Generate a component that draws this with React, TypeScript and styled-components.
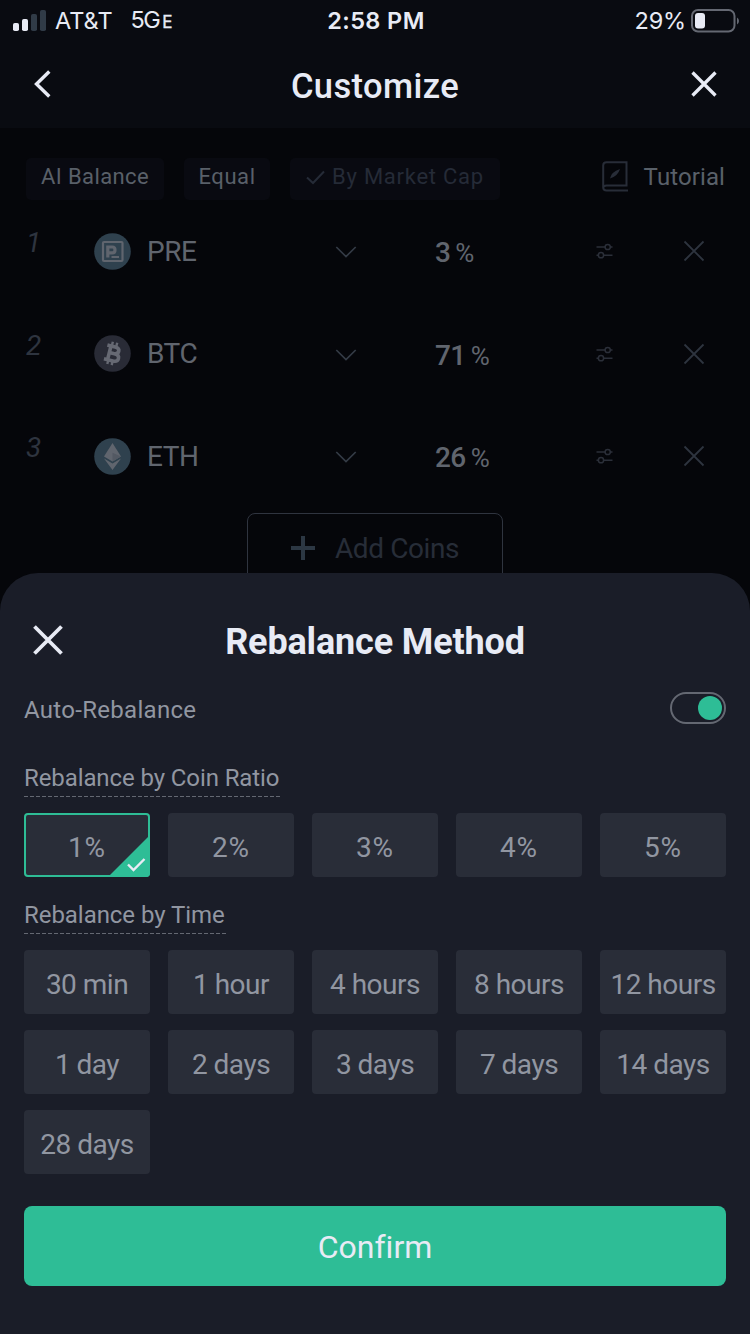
import React, { useState } from "react";
import styled, { createGlobalStyle } from "styled-components";

const GlobalStyle = createGlobalStyle`
  * { box-sizing: border-box; }
  html, body { margin: 0; padding: 0; background: #05060a; }
  body { font-family: Roboto, "Liberation Sans", sans-serif; font-variant-ligatures: none; overflow: hidden; }
  button { border: 0; padding: 0; margin: 0; background: none; font: inherit; color: inherit; }
  svg { display: block; flex: none; }
`;

const Screen = styled.div`
  position: relative;
  width: 750px;
  height: 1334px;
  background: #05060a;
  overflow: hidden;
`;

const TopArea = styled.header`
  height: 128px;
  background: #090b11;
  color: #e8ebf5;
`;

const StatusBar = styled.div`
  display: grid;
  grid-template-columns: 1fr auto 1fr;
  height: 40px;
  padding: 0 11px 0 13px;
  align-items: center;
  font-family: Inter, "Liberation Sans", sans-serif;
  font-size: 23.5px;
  line-height: 40px;
`;

const Carrier = styled.div`
  display: flex;
  align-items: center;
`;

const CarrierName = styled.span`
  margin-left: 9px;
  letter-spacing: 0;
`;

const Network = styled.span`
  margin-left: 18px;
  letter-spacing: -1.6px;
  small { font-size: 17px; margin-left: 3px; -webkit-text-stroke: 0.4px currentColor; }
`;

const Clock = styled.span`
  font-weight: 600;
  letter-spacing: 0.4px;
`;

const Battery = styled.div`
  display: flex;
  align-items: center;
  justify-content: flex-end;
  gap: 5px;
  letter-spacing: -0.2px;
`;

const NavBar = styled.div`
  display: grid;
  grid-template-columns: 100px 1fr 100px;
  height: 88px;
  align-items: center;
`;

const NavTitle = styled.h1`
  margin: 4px 0 0;
  text-align: center;
  font-size: 34.5px;
  font-weight: 500;
  line-height: 41px;
  letter-spacing: 0.4px;
`;

const NavButton = styled.button<{ $end?: boolean }>`
  display: flex;
  justify-content: ${(p) => (p.$end ? "flex-end" : "flex-start")};
  padding: ${(p) => (p.$end ? "0 33px 0 0" : "0 0 0 33px")};
`;

const PresetBar = styled.div`
  display: flex;
  height: 72px;
  padding: 30px 25px 0 26px;
  gap: 20px;
`;

const Preset = styled.button<{ $width: number; $active?: boolean; $spacing: number }>`
  display: flex;
  align-items: center;
  justify-content: center;
  gap: 7px;
  width: ${(p) => p.$width}px;
  height: 42px;
  padding-bottom: 5px;
  border-radius: 5px;
  background: #090a11;
  color: ${(p) => (p.$active ? "#252b37" : "#596069")};
  font-size: 22px;
  white-space: nowrap;
  letter-spacing: ${(p) => p.$spacing}px;
`;

const Tutorial = styled.div`
  display: flex;
  align-items: center;
  gap: 15px;
  height: 36px;
  margin-left: auto;
  color: #596069;
  font-size: 24px;
  letter-spacing: 0.1px;
`;

const TutorialText = styled.span`
  padding-top: 2px;
`;

const CoinRow = styled.div`
  display: grid;
  grid-template-columns: 68px 241px 100px 161px 87px 1fr;
  height: 102.5px;
  padding-left: 26px;
  align-items: center;
  color: #2e343f;
`;

const Position = styled.span`
  align-self: start;
  margin-top: 26px;
  font-size: 28px;
  font-style: italic;
  line-height: 33px;
`;

const CoinName = styled.div`
  display: flex;
  align-items: center;
  gap: 16px;
  color: #60656e;
  font-size: 28px;
  letter-spacing: -0.5px;
`;

const Share = styled.div`
  display: flex;
  align-items: baseline;
  gap: 5px;
  padding-top: 4px;
  color: #60656e;
  font-size: 28px;
  font-weight: 500;
  line-height: 32px;
  letter-spacing: -0.6px;
  small { font-size: 26px; font-weight: 400; }
`;

const AddCoins = styled.button`
  display: flex;
  width: 256px;
  height: 72px;
  margin: 5.5px auto 0;
  padding: 0 0 3px 42px;
  align-items: center;
  gap: 19px;
  border: 1px solid #2f343f;
  border-radius: 8px;
  color: #272d38;
  font-size: 28px;
  font-weight: 400;
  letter-spacing: -0.4px;
`;

const AddText = styled.span`
  padding-top: 2px;
`;

const Sheet = styled.section`
  position: absolute;
  left: 0;
  right: 0;
  bottom: 0;
  height: 761px;
  padding: 0 24px;
  border-radius: 38px 38px 0 0;
  background: #1a1d28;
  color: #9196a1;
`;

const SheetHeader = styled.div`
  display: grid;
  grid-template-columns: 60px 1fr 60px;
  height: 103px;
  padding-top: 31px;
  align-items: center;
  color: #e8ebf5;
`;

const SheetClose = styled.button`
  padding-left: 9px;
`;

const SheetTitle = styled.h2`
  margin: 3px 0 0;
  text-align: center;
  font-size: 36px;
  font-weight: 700;
  line-height: 42px;
  letter-spacing: -0.15px;
`;

const AutoRow = styled.div`
  display: flex;
  height: 64px;
  align-items: center;
  justify-content: space-between;
  font-size: 24px;
  letter-spacing: 0.3px;
`;

const AutoLabel = styled.span`
  padding-top: 4px;
`;

const Switch = styled.button<{ $on: boolean }>`
  display: flex;
  width: 56px;
  height: 32px;
  padding: 2px;
  align-items: center;
  justify-content: ${(p) => (p.$on ? "flex-end" : "flex-start")};
  border: 2px solid #646872;
  border-radius: 16px;
  &::after {
    content: "";
    width: 24px;
    height: 24px;
    border-radius: 50%;
    background: #2ebd96;
  }
`;

const Group = styled.div`
  display: flex;
  flex-direction: column;
  align-items: flex-start;
`;

const GroupLabel = styled.div<{ $spacing: number }>`
  margin-top: 22px;
  height: 35px;
  padding-right: 1px;
  font-size: 24px;
  line-height: 32px;
  letter-spacing: ${(p) => p.$spacing}px;
  background: repeating-linear-gradient(90deg, #646872 0 4px, transparent 4px 6px) 0 100% / 100% 1px no-repeat;
`;

const Options = styled.div`
  display: grid;
  grid-template-columns: repeat(5, 126px);
  gap: 16px 18px;
  margin-top: 16px;
`;

const Option = styled.button<{ $selected?: boolean; $spacing: number }>`
  position: relative;
  height: 64px;
  padding-top: 5px;
  border-radius: 4px;
  background: #292d38;
  box-shadow: ${(p) => (p.$selected ? "inset 0 0 0 2px #2ebd96" : "none")};
  font-size: 28px;
  letter-spacing: ${(p) => p.$spacing}px;
  overflow: hidden;
`;

const SelectedCorner = styled.svg`
  position: absolute;
  right: 0;
  bottom: 0;
`;

const Confirm = styled.button`
  display: block;
  width: 100%;
  height: 80px;
  margin-top: 32px;
  padding-top: 2px;
  border-radius: 8px;
  background: #2ebd96;
  color: #e8ebf5;
  font-size: 32px;
`;

const Cross = ({ size, weight }: { size: number; weight: number }) => (
  <svg width={size} height={size} viewBox={`0 0 ${size} ${size}`} fill="none" stroke="currentColor" strokeWidth={weight}>
    <path d={`M1.5 1.5L${size - 1.5} ${size - 1.5}M${size - 1.5} 1.5L1.5 ${size - 1.5}`} />
  </svg>
);

const SignalIcon = () => (
  <svg width="33" height="22" viewBox="0 0 33 22">
    <rect x="0" y="13" width="6" height="8" rx="1.8" fill="#e8ebf5" />
    <rect x="9" y="9" width="6" height="12" rx="1.8" fill="#e8ebf5" />
    <rect x="18" y="4" width="6" height="17" rx="1.8" fill="#303b47" />
    <rect x="27" y="0" width="6" height="21" rx="1.8" fill="#303b47" />
  </svg>
);

const BatteryIcon = () => (
  <svg width="48" height="24" viewBox="0 0 48 24">
    <rect x="1" y="1" width="42.5" height="21.5" rx="6" fill="none" stroke="#646872" strokeWidth="2" />
    <rect x="4" y="4" width="10" height="15.5" rx="3" fill="#e8ebf5" />
    <path d="M46 8.5Q48 9.5 48 12T46 15.5Z" fill="#646872" />
  </svg>
);

const TutorialIcon = () => (
  <svg width="27" height="31" viewBox="0 0 27 31" fill="none" stroke="#282d38" strokeWidth="2">
    <path d="M26 29.5H4.5Q1.2 29.5 1.2 26.5V4.5Q1.2 1.2 4.5 1.2H24.5V24.5H4.5Q1.2 24.5 1.2 27" />
    <path d="M8 17.5Q9 11 18 8Q16 15 8 17.5Z" fill="#282d38" stroke="none" />
  </svg>
);

const ChevronIcon = () => (
  <svg width="22" height="14" viewBox="0 0 22 14" fill="none" stroke="#343b46" strokeWidth="1.7">
    <path d="M1.3 3L11 12.5L20.7 3" />
  </svg>
);

const SlidersIcon = () => (
  <svg width="17" height="16" viewBox="0 0 17 16" fill="none" stroke="#2b2f39" strokeWidth="1.5">
    <path d="M.5 4H9M14 4h2.5M.5 12.2H3M8 12.2h8.5" />
    <circle cx="11.7" cy="4" r="2.6" />
    <circle cx="5" cy="12.2" r="2.6" />
  </svg>
);

const CoinIcon = ({ code }: { code: string }) => (
  <svg width="37" height="37" viewBox="0 0 37 37">
    <circle cx="18.5" cy="18.5" r="18.3" fill={code === "BTC" ? "#292b36" : "#2f414e"} />
    {code === "PRE" && (
      <g fill="none" stroke="#60656e">
        <rect x="9" y="9" width="19.5" height="19" rx="1" strokeWidth="2.2" />
        <path d="M13.8 24.5V14H18.3Q21 14 21 16.9T18.3 19.8H14" strokeWidth="3.2" />
        <path d="M17.5 24H25" strokeWidth="2" />
      </g>
    )}
    {code === "BTC" && (
      <g transform="rotate(14 18.5 18.5)" fill="none" stroke="#666973">
        <path d="M11.5 11.5H19.5Q24 11.5 24 14.8T19.5 18.3H15H20.5Q25.5 18.3 25.5 22T20.5 25.7H11.5M15.2 11.5V25.7" strokeWidth="3.6" />
        <path d="M16 7V11M20.5 7V11M16 26V30M20.5 26V30" strokeWidth="2.4" />
      </g>
    )}
    {code === "ETH" && (
      <g fill="#60656e">
        <path d="M18.5 5L27 18.5L18.5 23.5L10 18.5Z" />
        <path d="M10 20.5L18.5 25.5L27 20.5L18.5 32Z" />
        <path d="M18.5 14.8L27 18.5L18.5 23.5Z" fill="#535963" />
      </g>
    )}
  </svg>
);

const coins = [
  { code: "PRE", share: 3 },
  { code: "BTC", share: 71 },
  { code: "ETH", share: 26 },
];
const ratios = ["1%", "2%", "3%", "4%", "5%"];
const intervals = [
  "30 min", "1 hour", "4 hours", "8 hours", "12 hours",
  "1 day", "2 days", "3 days", "7 days", "14 days", "28 days",
];

export default function App() {
  const [auto, setAuto] = useState(true);
  const [choice, setChoice] = useState("1%");

  const renderOption = (label: string) => (
    <Option
      key={label}
      $selected={choice === label}
      $spacing={label.endsWith("%") ? 0.9 : -0.5}
      onClick={() => setChoice(label)}
    >
      {label}
      {choice === label && (
        <SelectedCorner width="42" height="42" viewBox="0 0 42 42" fill="none">
          <path d="M42 0V42H0Z" fill="#2ebd96" />
          <path d="M20 29.5L25.5 35L36.5 24" stroke="#e8ebf5" strokeWidth="2.4" />
        </SelectedCorner>
      )}
    </Option>
  );

  return (
    <>
      <GlobalStyle />
      <Screen>
        <TopArea>
          <StatusBar>
            <Carrier>
              <SignalIcon />
              <CarrierName>AT&amp;T</CarrierName>
              <Network>5G<small>E</small></Network>
            </Carrier>
            <Clock>2:58 PM</Clock>
            <Battery>
              29%
              <BatteryIcon />
            </Battery>
          </StatusBar>
          <NavBar>
            <NavButton aria-label="Back">
              <svg width="18" height="28" viewBox="0 0 18 28" fill="none" stroke="currentColor" strokeWidth="3.4">
                <path d="M16.3 1.5L3.5 14L16.3 26.5" />
              </svg>
            </NavButton>
            <NavTitle>Customize</NavTitle>
            <NavButton $end aria-label="Close">
              <Cross size={26} weight={3.3} />
            </NavButton>
          </NavBar>
        </TopArea>

        <PresetBar>
          <Preset $width={138} $spacing={0.4}>AI Balance</Preset>
          <Preset $width={86} $spacing={0.6}>Equal</Preset>
          <Preset $width={210} $spacing={0.75} $active>
            <svg width="19" height="16" viewBox="0 0 19 16" fill="none" stroke="currentColor" strokeWidth="2">
              <path d="M1 8.5L7 14L18 2.5" />
            </svg>
            By Market Cap
          </Preset>
          <Tutorial>
            <TutorialIcon />
            <TutorialText>Tutorial</TutorialText>
          </Tutorial>
        </PresetBar>

        {coins.map((coin, i) => (
          <CoinRow key={coin.code}>
            <Position>{i + 1}</Position>
            <CoinName>
              <CoinIcon code={coin.code} />
              {coin.code}
            </CoinName>
            <ChevronIcon />
            <Share>
              {coin.share}
              <small>%</small>
            </Share>
            <SlidersIcon />
            <Cross size={22} weight={1.8} />
          </CoinRow>
        ))}

        <AddCoins>
          <svg width="26" height="26" viewBox="0 0 26 26" stroke="#2c3743" strokeWidth="4">
            <path d="M13 1V25M1 13H25" />
          </svg>
          <AddText>Add Coins</AddText>
        </AddCoins>

        <Sheet>
          <SheetHeader>
            <SheetClose aria-label="Close">
              <Cross size={30} weight={3.8} />
            </SheetClose>
            <SheetTitle>Rebalance Method</SheetTitle>
          </SheetHeader>
          <AutoRow>
            <AutoLabel>Auto-Rebalance</AutoLabel>
            <Switch $on={auto} aria-label="Auto-Rebalance" onClick={() => setAuto(!auto)} />
          </AutoRow>
          <Group>
            <GroupLabel $spacing={-0.1}>Rebalance by Coin Ratio</GroupLabel>
            <Options>{ratios.map(renderOption)}</Options>
          </Group>
          <Group>
            <GroupLabel $spacing={-0.05}>Rebalance by Time</GroupLabel>
            <Options>{intervals.map(renderOption)}</Options>
          </Group>
          <Confirm>Confirm</Confirm>
        </Sheet>
      </Screen>
    </>
  );
}
